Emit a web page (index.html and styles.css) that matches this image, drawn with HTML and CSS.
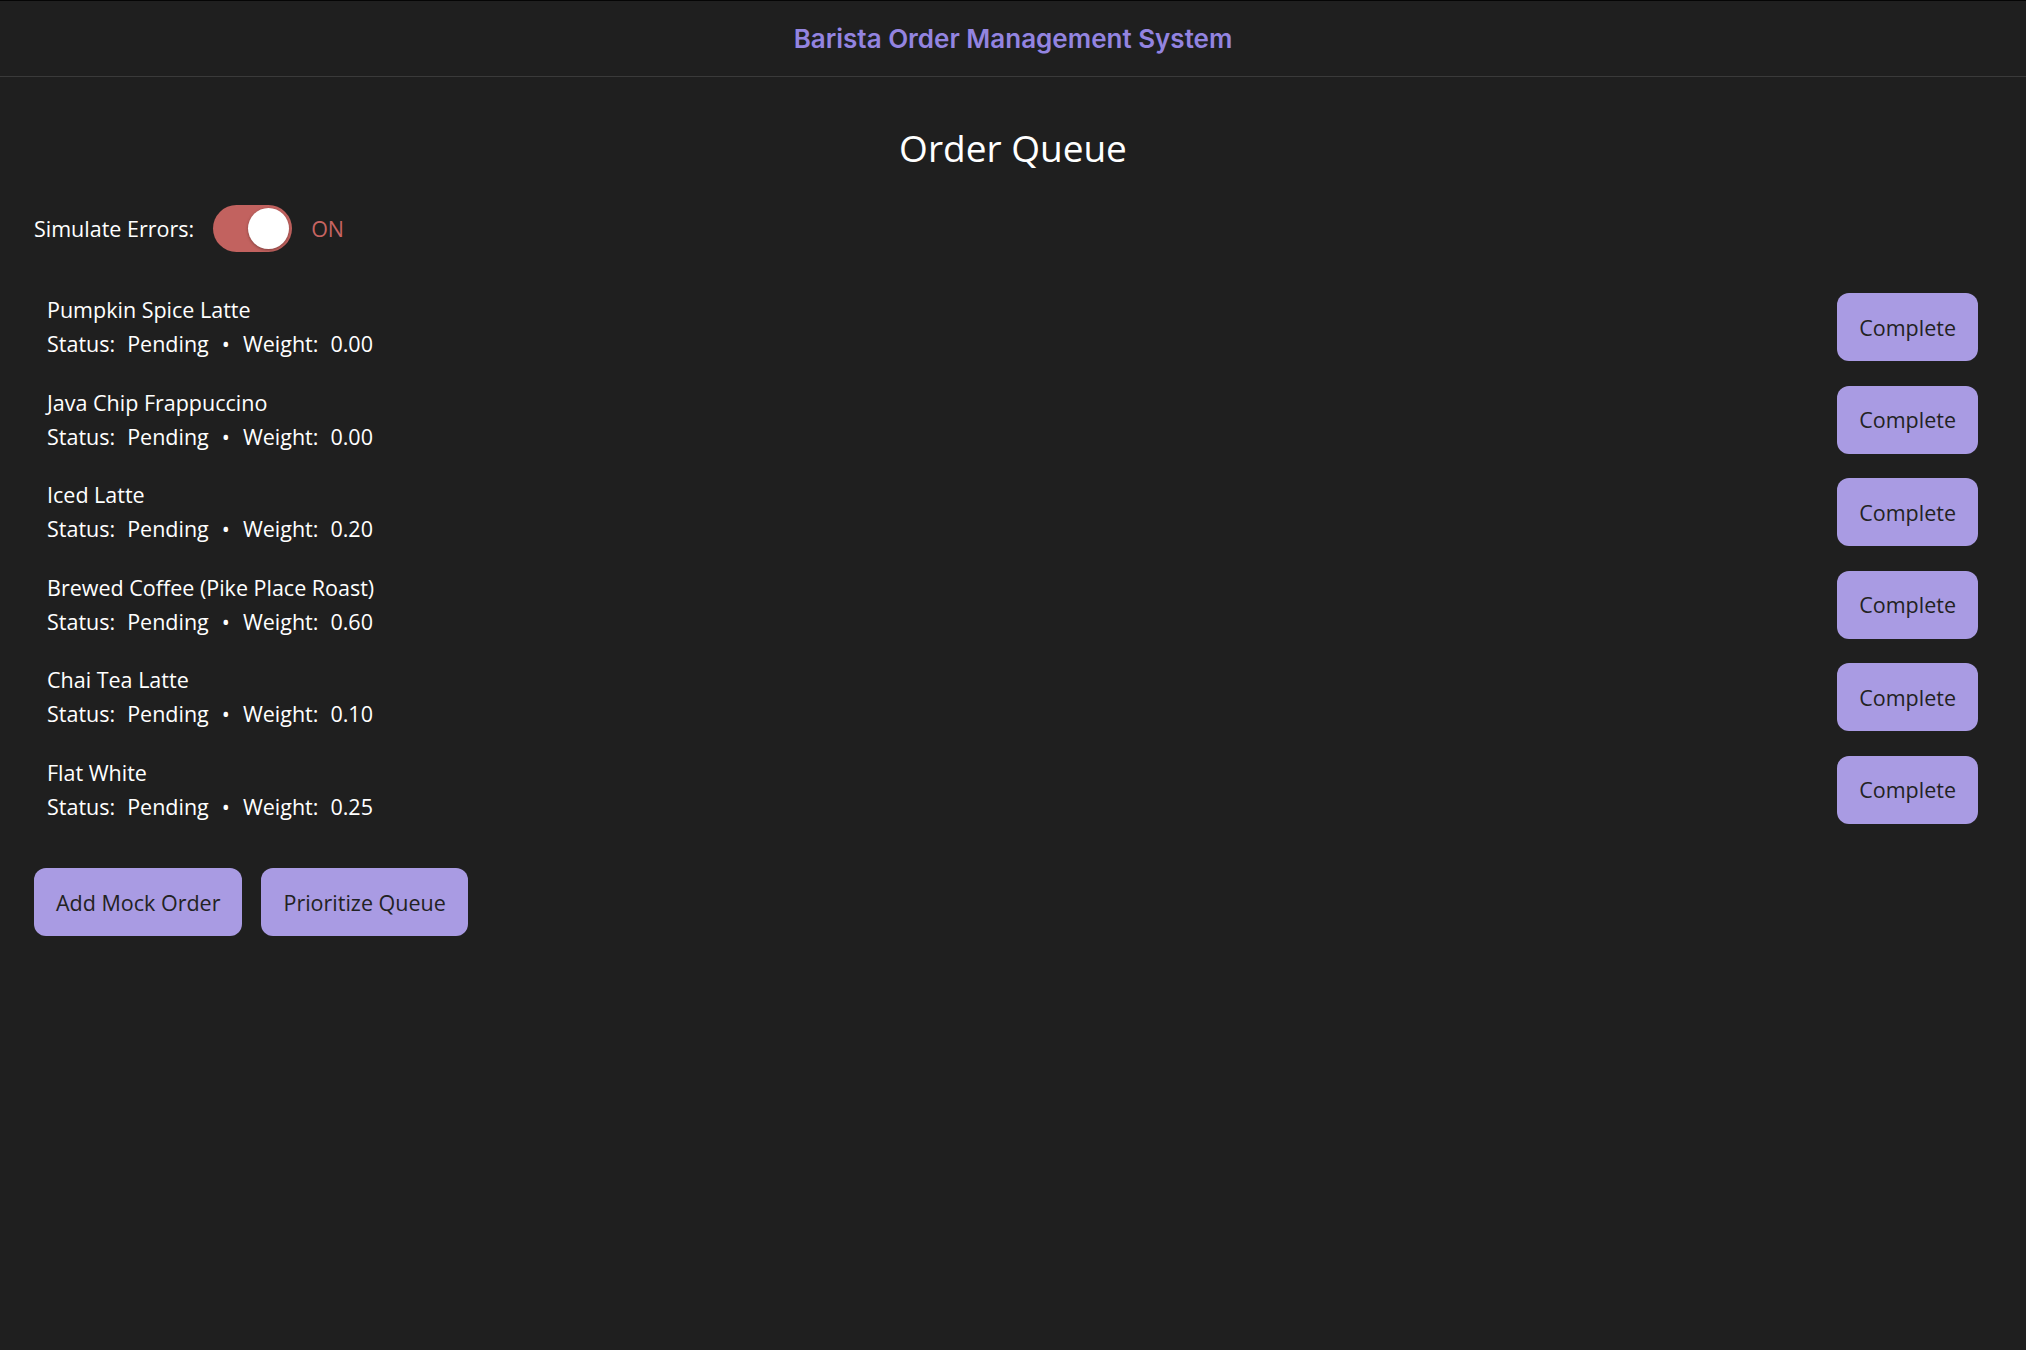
FILE: index.html
```html
<!DOCTYPE html>
<html lang="en">
<head>
<meta charset="utf-8">
<title>Barista Order Management System</title>
<link rel="stylesheet" href="styles.css">
</head>
<body>
<header class="app-header">
  <h1 class="app-title">Barista Order Management System</h1>
</header>
<main class="content">
  <h2 class="queue-title">Order Queue</h2>
  <div class="sim-row">
    <span class="sim-label">Simulate Errors:</span>
    <span class="toggle on"><span class="knob"></span></span>
    <span class="sim-state">ON</span>
  </div>
  <ul class="orders">
    <li class="order">
      <div class="order-info">
        <div class="order-name">Pumpkin Spice Latte</div>
        <div class="order-meta"><span>Status:</span><span class="val">Pending</span><span class="sep">•</span><span>Weight:</span><span class="val">0.00</span></div>
      </div>
      <button class="btn">Complete</button>
    </li>
    <li class="order">
      <div class="order-info">
        <div class="order-name">Java Chip Frappuccino</div>
        <div class="order-meta"><span>Status:</span><span class="val">Pending</span><span class="sep">•</span><span>Weight:</span><span class="val">0.00</span></div>
      </div>
      <button class="btn">Complete</button>
    </li>
    <li class="order">
      <div class="order-info">
        <div class="order-name">Iced Latte</div>
        <div class="order-meta"><span>Status:</span><span class="val">Pending</span><span class="sep">•</span><span>Weight:</span><span class="val">0.20</span></div>
      </div>
      <button class="btn">Complete</button>
    </li>
    <li class="order">
      <div class="order-info">
        <div class="order-name">Brewed Coffee (Pike Place Roast)</div>
        <div class="order-meta"><span>Status:</span><span class="val">Pending</span><span class="sep">•</span><span>Weight:</span><span class="val">0.60</span></div>
      </div>
      <button class="btn">Complete</button>
    </li>
    <li class="order">
      <div class="order-info">
        <div class="order-name">Chai Tea Latte</div>
        <div class="order-meta"><span>Status:</span><span class="val">Pending</span><span class="sep">•</span><span>Weight:</span><span class="val">0.10</span></div>
      </div>
      <button class="btn">Complete</button>
    </li>
    <li class="order">
      <div class="order-info">
        <div class="order-name">Flat White</div>
        <div class="order-meta"><span>Status:</span><span class="val">Pending</span><span class="sep">•</span><span>Weight:</span><span class="val">0.25</span></div>
      </div>
      <button class="btn">Complete</button>
    </li>
  </ul>
  <div class="actions">
    <button class="btn">Add Mock Order</button>
    <button class="btn">Prioritize Queue</button>
  </div>
</main>
</body>
</html>
```
FILE: styles.css
```css
html, body {
  margin: 0;
  padding: 0;
  background: #1f1f1f;
  min-height: 100%;
}
body {
  font-family: "Open Sans", "Noto Sans", sans-serif;
  color: #ffffff;
  font-size: 21.5px;
}
.app-header {
  height: 75px;
  border-top: 1px solid #050505;
  border-bottom: 1px solid #3a3a3a;
  display: flex;
  align-items: center;
  justify-content: center;
}
.app-title {
  margin: 0;
  font-family: Inter, "Liberation Sans", sans-serif;
  font-weight: 600;
  font-size: 26px;
  color: #9384e0;
}
.content {
  padding: 0 34px;
}
.queue-title {
  margin: 46px 0 0;
  text-align: center;
  font-weight: 400;
  font-size: 37px;
  line-height: 50px;
}
.sim-row {
  margin-top: 32px;
  display: flex;
  align-items: center;
  height: 47px;
}
.sim-label {
  margin-right: 19px;
}
.toggle {
  position: relative;
  width: 79px;
  height: 47px;
  border-radius: 24px;
  background: #c2625f;
  margin-right: 19px;
}
.knob {
  position: absolute;
  top: 3px;
  right: 3px;
  width: 41px;
  height: 41px;
  border-radius: 50%;
  background: #ffffff;
  box-shadow: 0 1px 3px rgba(0,0,0,0.35);
}
.sim-state {
  color: #c76461;
}
.orders {
  list-style: none;
  margin: 29px 0 0;
  padding: 0;
}
.order {
  display: flex;
  align-items: center;
  justify-content: space-between;
  padding: 12.25px 14px 12.25px 13px;
}
.order-info {
  line-height: 34px;
}
.order-meta .val {
  margin-left: 12px;
}
.order-meta .sep {
  margin: 0 13px;
}
.btn {
  font-family: "Open Sans", "Noto Sans", sans-serif;
  font-size: 21.5px;
  line-height: 29px;
  padding: 19.5px 22px;
  border: none;
  border-radius: 12px;
  background: #a99be3;
  color: #222222;
  cursor: pointer;
}
.actions {
  margin-top: 32px;
  display: flex;
  gap: 19px;
}
```
